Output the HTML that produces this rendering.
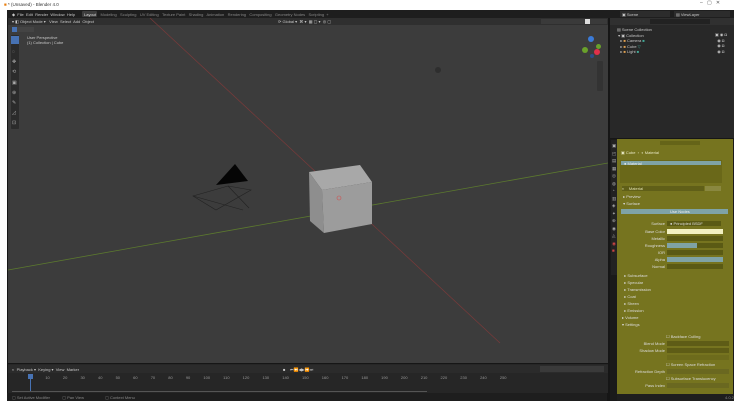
<!DOCTYPE html><html><head><style>
*{margin:0;padding:0;box-sizing:border-box}
body{width:738px;height:404px;background:#fff;position:relative;overflow:hidden;font-family:"Liberation Sans",sans-serif;font-size:4px;color:#ccc}
.a{position:absolute}
.t{position:absolute;white-space:nowrap;font-size:4px;line-height:5px;color:#c8c8c8}
.l{position:absolute;white-space:nowrap;font-size:4px;line-height:5px;color:#ddd;right:73px}
</style></head><body>
<div class="t" style="left:4px;top:2px;color:#333;font-size:4.5px"><span style="color:#e87d0d">■</span> * (Unsaved) - Blender 4.0</div>
<div class="t" style="left:700px;top:1px;color:#555;font-size:5px">–&nbsp;&nbsp;&nbsp;▢&nbsp;&nbsp;&nbsp;✕</div>
<div class="a" style="left:7px;top:10px;width:727px;height:391px;background:#161616"></div>
<div class="a" style="left:7px;top:10px;width:727px;height:8px;background:#1e1e1e"></div>
<div class="t" style="left:12px;top:11.5px">◆&nbsp; File&nbsp; Edit&nbsp; Render&nbsp; Window&nbsp; Help</div>
<div class="a" style="left:82px;top:11px;width:15px;height:6px;background:#3d3d3d;border-radius:1px"></div>
<div class="t" style="left:84px;top:11.5px;color:#ddd">Layout&nbsp;&nbsp;&nbsp;&nbsp;<span style="color:#888">Modeling&nbsp;&nbsp; Sculpting&nbsp;&nbsp; UV Editing&nbsp;&nbsp; Texture Paint&nbsp;&nbsp; Shading&nbsp;&nbsp; Animation&nbsp;&nbsp; Rendering&nbsp;&nbsp; Compositing&nbsp;&nbsp; Geometry Nodes&nbsp;&nbsp; Scripting&nbsp; +</span></div>
<div class="a" style="left:620px;top:11px;width:50px;height:6px;background:#2c2c2c"></div>
<div class="t" style="left:622px;top:11.5px">▣ Scene</div>
<div class="a" style="left:674px;top:11px;width:56px;height:6px;background:#2c2c2c"></div>
<div class="t" style="left:676px;top:11.5px">▤ ViewLayer</div>
<div class="a" style="left:8px;top:18px;width:600px;height:345px;background:#3c3c3c"></div>
<div class="a" style="left:8px;top:18px;width:600px;height:7px;background:#2f2f2f"></div>
<div class="t" style="left:12px;top:19px">▾ ◧ Object Mode ▾&nbsp;&nbsp; View&nbsp; Select&nbsp; Add&nbsp; Object</div>
<div class="t" style="left:278px;top:19px">⟳ Global ▾&nbsp; ⌘ ▾&nbsp; ▦ ▢ ▾&nbsp; ◎ ▢</div>
<div class="a" style="left:541px;top:19px;width:66px;height:5px;background:#3a3a3a"></div>
<div class="a" style="left:585px;top:19px;width:5px;height:5px;background:#ddd"></div>
<div class="a" style="left:12px;top:27px;width:22px;height:5px;background:#444"></div>
<div class="a" style="left:12px;top:27px;width:5px;height:5px;background:#4772b3"></div>
<div class="t" style="left:27px;top:35px">User Perspective</div>
<div class="t" style="left:27px;top:40px">(1) Collection | Cube</div>
<div class="a" style="left:11px;top:35px;width:8px;height:94px;background:#2b2b2b;border-radius:1px"></div>
<div class="a" style="left:11px;top:36px;width:8px;height:8px;background:#4772b3"></div>
<div class="t" style="left:12px;top:47px;color:#aaa;line-height:10.2px;font-size:5px">◌<br>✥<br>⟲<br>▣<br>⊕<br>✎<br>◿<br>⊡</div>
<div class="a" style="left:588px;top:36px;width:6px;height:6px;background:#3b7bd8;border-radius:50%"></div>
<div class="a" style="left:582px;top:47px;width:6px;height:6px;background:#6aa12b;border-radius:50%"></div>
<div class="a" style="left:596px;top:44px;width:5px;height:5px;background:#6aa12b;border-radius:50%"></div>
<div class="a" style="left:594px;top:49px;width:6px;height:6px;background:#e0304a;border-radius:50%"></div>
<div class="a" style="left:590px;top:54px;width:4px;height:4px;background:#2a4e86;border-radius:50%"></div>
<div class="a" style="left:597px;top:61px;width:6px;height:30px;background:#333;border-radius:1px"></div>
<svg class="a" style="left:8px;top:18px" width="600" height="345">
<line x1="0" y1="252" x2="600" y2="145" stroke="#5c7a2e" stroke-width="0.8"/>
<line x1="142" y1="0" x2="492" y2="325" stroke="#7a3a3a" stroke-width="0.7"/>
<circle cx="430" cy="52" r="3" fill="#2e2e2e"/>
<polygon points="208,167 227,146 240,163" fill="#050505"/>
<polygon points="185,178 220,168 243,172 208,192" fill="none" stroke="#222" stroke-width="0.6"/>
<line x1="185" y1="178" x2="235" y2="192" stroke="#222" stroke-width="0.6"/>
<line x1="220" y1="168" x2="241" y2="190" stroke="#222" stroke-width="0.6"/>
<polygon points="301,154 352,147 364,164 314,172" fill="#a8a8a8"/>
<polygon points="301,154 314,172 316,215 302,203" fill="#8e8e8e"/>
<polygon points="314,172 364,164 364,206 316,215" fill="#9c9c9c"/>
<circle cx="331" cy="180" r="2" fill="none" stroke="#d05050" stroke-width="0.6"/>
</svg>
<div class="a" style="left:8px;top:364px;width:600px;height:29px;background:#262626"></div>
<div class="a" style="left:8px;top:365px;width:600px;height:8px;background:#2b2b2b"></div>
<div class="t" style="left:12px;top:366.5px">◐ &nbsp;Playback ▾&nbsp; Keying ▾&nbsp; View&nbsp; Marker</div>
<div class="t" style="left:283px;top:366.5px">■&nbsp;&nbsp;&nbsp; ⏮⏪◀▶⏩⏭</div>
<div class="a" style="left:540px;top:366px;width:64px;height:6px;background:#3a3a3a"></div>
<div class="t" style="left:30px;top:374.5px;color:#999;word-spacing:12px">1 10 20 30 40 50 60 70 80 90 100 110 120 130 140 150 160 170 180 190 200 210 220 230 240 250</div>
<div class="a" style="left:28px;top:374px;width:5px;height:5px;background:#4772b3"></div>
<div class="a" style="left:30px;top:379px;width:1px;height:12px;background:#4772b3"></div>
<div class="a" style="left:12px;top:391px;width:415px;height:1px;background:#555"></div>
<div class="a" style="left:7px;top:393px;width:600px;height:8px;background:#1e1e1e"></div>
<div class="t" style="left:12px;top:394.5px;color:#888">▢ Set Active Modifier&nbsp;&nbsp;&nbsp;&nbsp;&nbsp;&nbsp;&nbsp;&nbsp;&nbsp;&nbsp; ▢ Pan View&nbsp;&nbsp;&nbsp;&nbsp;&nbsp;&nbsp;&nbsp;&nbsp;&nbsp;&nbsp;&nbsp;&nbsp;&nbsp;&nbsp;&nbsp;&nbsp;&nbsp;&nbsp; ▢ Context Menu</div>
<div class="a" style="left:610px;top:18px;width:124px;height:120px;background:#282828"></div>
<div class="a" style="left:610px;top:18px;width:124px;height:7px;background:#303030"></div>
<div class="a" style="left:650px;top:19px;width:60px;height:5px;background:#222"></div>
<div class="t" style="left:617px;top:27px;line-height:5.6px">▤ Scene Collection<br>&nbsp;▾ ▣ Collection<br>&nbsp;&nbsp;&nbsp;▸ <span style="color:#e0a050">■</span> Camera <span style="color:#4a9">■</span><br>&nbsp;&nbsp;&nbsp;▸ <span style="color:#e0a050">■</span> Cube <span style="color:#4a9">▽</span><br>&nbsp;&nbsp;&nbsp;▸ <span style="color:#e0a050">■</span> Light <span style="color:#4a9">■</span></div>
<div class="t" style="left:715px;top:32px;line-height:5.6px">▣ ◉ ◘<br>&nbsp;&nbsp;◉ ◘<br>&nbsp;&nbsp;◉ ◘<br>&nbsp;&nbsp;◉ ◘</div>
<div class="a" style="left:610px;top:139px;width:124px;height:262px;background:#1a1a1a"></div>
<div class="a" style="left:611px;top:140px;width:9px;height:135px;background:#222"></div>
<div class="t" style="left:612px;top:142px;line-height:7.5px;color:#aaa;font-size:4.5px">▣<br>◰<br>▤<br>▦<br>◎<br>◍<br>◔<br>▥<br>◈<br>✦<br>⊕<br>◉<br>◬<br><span style="color:#c44">◉</span><br><span style="color:#c44">■</span></div>
<div class="a" style="left:617px;top:139px;width:116px;height:255px;background:#76741f"></div>
<div class="a" style="left:660px;top:141px;width:40px;height:4px;background:#656418"></div>
<div class="t" style="left:621px;top:150px;color:#e6e6c0">▣ Cube&nbsp; › &nbsp;◐ Material</div>
<div class="a" style="left:620px;top:160px;width:102px;height:23px;background:#6a6819"></div>
<div class="a" style="left:621px;top:161px;width:100px;height:4px;background:#7fa3a6"></div>
<div class="t" style="left:624px;top:160.5px;color:#eee">● Material</div>
<div class="a" style="left:622px;top:186px;width:82px;height:5px;background:#605f18"></div>
<div class="t" style="left:622px;top:186px;color:#e0e0b0">◐ &nbsp;&nbsp;&nbsp;Material</div>
<div class="a" style="left:705px;top:186px;width:16px;height:5px;background:#8a8840"></div>
<div class="t" style="left:622px;top:194px;color:#ddd">&nbsp;▸ Preview</div>
<div class="t" style="left:622px;top:201px;color:#ddd">&nbsp;▾ Surface</div>
<div class="a" style="left:621px;top:209px;width:107px;height:5px;background:#7fa3a6"></div>
<div class="t" style="left:670px;top:209px;color:#eee">Use Nodes</div>
<div class="l" style="top:221px">Surface</div>
<div class="l" style="top:229px">Base Color</div>
<div class="l" style="top:236px">Metallic</div>
<div class="l" style="top:243px">Roughness</div>
<div class="l" style="top:250px">IOR</div>
<div class="l" style="top:257px">Alpha</div>
<div class="l" style="top:264px">Normal</div>
<div class="a" style="left:667px;top:221px;width:54px;height:5px;background:#5a5a14"></div>
<div class="t" style="left:670px;top:221px;color:#ddd">● Principled BSDF</div>
<div class="a" style="left:667px;top:229px;width:56px;height:5px;background:#f1f0c0"></div>
<div class="a" style="left:667px;top:236px;width:56px;height:5px;background:#5a5a14"></div>
<div class="a" style="left:667px;top:243px;width:56px;height:5px;background:#5a5a14"></div>
<div class="a" style="left:667px;top:243px;width:30px;height:5px;background:#7fa3a6"></div>
<div class="a" style="left:667px;top:250px;width:56px;height:5px;background:#5a5a14"></div>
<div class="a" style="left:667px;top:257px;width:56px;height:5px;background:#7fa3a6"></div>
<div class="a" style="left:667px;top:264px;width:56px;height:5px;background:#5a5a14"></div>
<div class="t" style="left:622px;top:272px;color:#ddd;line-height:7px">&nbsp;&nbsp;▸ Subsurface<br>&nbsp;&nbsp;▸ Specular<br>&nbsp;&nbsp;▸ Transmission<br>&nbsp;&nbsp;▸ Coat<br>&nbsp;&nbsp;▸ Sheen<br>&nbsp;&nbsp;▸ Emission<br>▸ Volume<br>▾ Settings</div>
<div class="t" style="left:666px;top:334px;color:#ddd">☐ Backface Culling</div>
<div class="l" style="top:341px">Blend Mode</div>
<div class="l" style="top:348px">Shadow Mode</div>
<div class="a" style="left:667px;top:341px;width:62px;height:5px;background:#5e5c16"></div>
<div class="a" style="left:667px;top:348px;width:62px;height:5px;background:#5e5c16"></div>
<div class="a" style="left:667px;top:355px;width:62px;height:5px;background:#6d6b1c"></div>
<div class="t" style="left:666px;top:362px;color:#ddd">☐ Screen Space Refraction</div>
<div class="l" style="top:369px">Refraction Depth</div>
<div class="a" style="left:667px;top:369px;width:62px;height:5px;background:#6a6820"></div>
<div class="t" style="left:666px;top:376px;color:#ddd">☐ Subsurface Translucency</div>
<div class="l" style="top:383px">Pass Index</div>
<div class="a" style="left:667px;top:383px;width:62px;height:5px;background:#6a6820"></div>
<div class="a" style="left:617px;top:394px;width:117px;height:7px;background:#1e1e1e"></div>
<div class="t" style="left:725px;top:395px;color:#888">4.0.2</div>
</body></html>
